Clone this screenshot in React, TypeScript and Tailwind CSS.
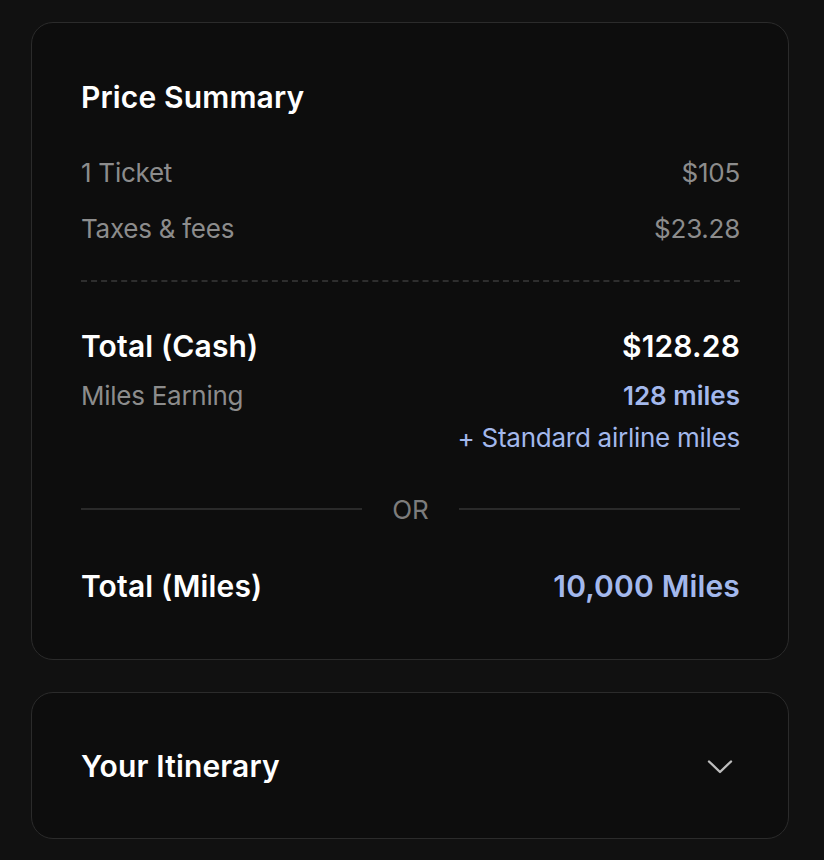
import React from "react";

export default function App() {
  const font = { fontFamily: "Inter, 'Noto Sans', sans-serif" } as React.CSSProperties;
  return (
    <div className="min-h-[860px] w-full bg-[#111111] pt-[22px] pl-[31px] flex flex-col gap-[32px]" style={font}>
      <div className="w-[758px] rounded-[22px] border border-[#2b2b2b] bg-[#0d0d0d] pl-[49px] pr-[48px] pt-[56px] pb-[53px] flex flex-col">
        <div className="h-[36px] flex items-center text-[30px] font-semibold text-white tracking-[0.005em]">Price Summary</div>
        <div className="mt-[29px] h-[56px] flex items-center justify-between text-[26px] text-[#8c8c8c] tracking-[-0.01em]">
          <span>1 Ticket</span>
          <span>$105</span>
        </div>
        <div className="h-[56px] flex items-center justify-between text-[26px] text-[#8c8c8c] tracking-[-0.01em]">
          <span>Taxes &amp; fees</span>
          <span>$23.28</span>
        </div>
        <div className="mt-[24px] border-t-2 border-dashed border-[#2e2e2e]" />
        <div className="mt-[40px] h-[48px] flex items-center justify-between text-[30px] font-semibold text-white tracking-[0.005em]">
          <span>Total (Cash)</span>
          <span>$128.28</span>
        </div>
        <div className="h-[50px] flex items-center justify-between text-[26px] tracking-[-0.01em]">
          <span className="text-[#8c8c8c]">Miles Earning</span>
          <span className="text-[#a3b8ec] font-semibold tracking-normal">128 miles</span>
        </div>
        <div className="h-[34px] flex items-center justify-end text-[26px] text-[#a3b8ec] tracking-[-0.01em]">
          + Standard airline miles
        </div>
        <div className="mt-[35px] h-[40px] flex items-center gap-[30px]">
          <div className="flex-1 h-[2px] bg-[#2a2a2a]" />
          <span className="text-[26px] text-[#7c7c7c]">OR</span>
          <div className="flex-1 h-[2px] bg-[#2a2a2a]" />
        </div>
        <div className="mt-[37px] h-[40px] flex items-center justify-between text-[30px] font-semibold tracking-[0.005em]">
          <span className="text-white">Total (Miles)</span>
          <span className="text-[#a3b8ec]">10,000 Miles</span>
        </div>
      </div>
      <div className="w-[758px] h-[147px] rounded-[22px] border border-[#2b2b2b] bg-[#0d0d0d] pl-[49px] pr-[55px] pt-[2px] flex items-center justify-between">
        <span className="text-[30px] font-semibold text-white tracking-[0.005em]">Your Itinerary</span>
        <svg width="26" height="16" viewBox="0 0 26 16" fill="none">
          <path d="M2 2.5 L13 13 L24 2.5" stroke="#bdbdbd" strokeWidth="2.4" strokeLinecap="round" strokeLinejoin="round" />
        </svg>
      </div>
    </div>
  );
}
